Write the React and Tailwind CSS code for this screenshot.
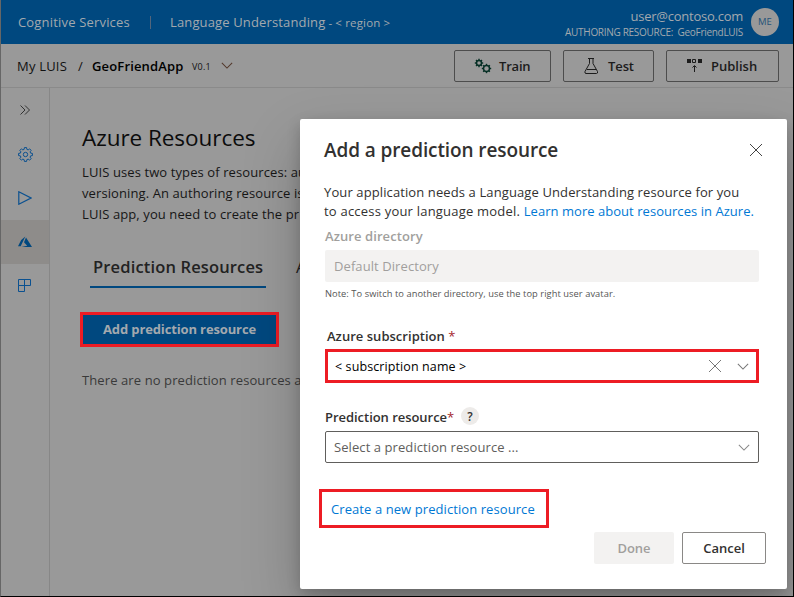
import React from "react";

function Chevron({ className }) {
  return (
    <svg viewBox="0 0 14 8" className={className} fill="none" stroke="currentColor" strokeWidth="1.2">
      <path d="M1 1l6 6 6-6" />
    </svg>
  );
}

function Cross({ className }) {
  return (
    <svg viewBox="0 0 12 12" className={className} fill="none" stroke="currentColor" strokeWidth="1">
      <path d="M0 0l12 12M12 0L0 12" />
    </svg>
  );
}

function Gear({ cx, cy, r }) {
  const teeth = [0, 45, 90, 135, 180, 225, 270, 315];
  return (
    <g>
      <circle cx={cx} cy={cy} r={r} strokeWidth="1.5" fill="none" />
      {teeth.map((a) => (
        <path key={a} d={`M${cx} ${cy - r - 0.4}v-1.3`} strokeWidth="1.4" transform={`rotate(${a} ${cx} ${cy})`} />
      ))}
    </g>
  );
}

// Outline of an eight-toothed cog centred in a 15px box
const cogPoints = Array.from({ length: 8 }, (_, i) =>
  [
    [-15, 5.3],
    [-9, 7],
    [9, 7],
    [15, 5.3],
  ].map(([offset, radius]) => {
    const a = ((i * 45 + offset) * Math.PI) / 180;
    return `${(7.5 + radius * Math.sin(a)).toFixed(2)},${(7.5 - radius * Math.cos(a)).toFixed(2)}`;
  }).join(" ")
).join(" ");

function Header() {
  return (
    <header className="flex h-11 items-center bg-[#00487f] pl-[17px] pr-[14px] text-[#a3a9ae]">
      <span className="w-[132px] pt-[2px] text-[13px] tracking-[0.18px]">Cognitive Services</span>
      <span className="h-[13px] w-px bg-[#53657b]" />
      <span className="ml-[19px] pt-[2px] text-[13px] tracking-[0.14px]">Language Understanding</span>
      <span className="ml-[3px] pt-[2px] text-[11.5px] tracking-[0.15px]">- &lt; region &gt;</span>
      <div className="ml-auto mr-2 flex flex-col items-end pt-[3px]">
        <span className="text-[13px] leading-[16px] tracking-[-0.25px]">user@contoso.com</span>
        <span className="whitespace-pre text-[10px] leading-[16px] tracking-[-0.3px]">AUTHORING RESOURCE:  GeoFriendLUIS</span>
      </div>
      <span className="flex size-7 items-center justify-center rounded-full bg-[#999] pt-px text-[9.5px] text-[#265378]">ME</span>
    </header>
  );
}

function Toolbar() {
  return (
    <div className="flex h-11 items-center border-b border-[#8a8a8a] pl-4 pr-[14px] text-[#111]">
      <span className="w-[61px] pt-[2px] text-[13px] tracking-[0.2px]">My LUIS</span>
      <span className="w-[14px] pt-[2px] text-[13px]">/</span>
      <span className="w-[100px] pt-[2px] text-[13px] font-semibold tracking-[0.15px] text-black">GeoFriendApp</span>
      <span className="w-[29px] pt-[2px] text-[9px] tracking-[0.2px]">V0.1</span>
      <Chevron className="h-[7px] w-[12px] text-[#54392c]" />
      <div className="ml-auto flex gap-3 text-[13px] font-semibold text-[#1c1c1c]">
        <button className="flex h-8 w-[97px] items-center rounded-[2px] border border-[#4d4d4d] pl-[19px]">
          <svg className="mr-[7px] h-4 w-[18px] stroke-[#073026]" viewBox="0 0 18 16">
            <Gear cx={5} cy={5} r={2.5} />
            <Gear cx={12.5} cy={10.5} r={3} />
          </svg>
          <span className="pt-[2px] tracking-[-0.2px]">Train</span>
        </button>
        <button className="flex h-8 w-[91px] items-center rounded-[2px] border border-[#4d4d4d] pl-[20px]">
          <svg className="mr-[9px] h-4 w-[15px]" viewBox="0 0 15 16" fill="none" stroke="#1c1c1c">
            <path d="M4 .5h6M5.500 .5v5L1 13.500q-.5 2 1 2h10.500q1.500 0 1-2L9 5.500v-5M3 11.500h9" />
          </svg>
          <span className="pt-[2px] tracking-[-0.1px]">Test</span>
        </button>
        <button className="flex h-8 w-[113px] items-center rounded-[2px] border border-[#4d4d4d] pl-[20px]">
          <svg className="mr-[9px] h-4 w-[15px]" viewBox="0 0 15 16" fill="none" stroke="#1c1c1c">
            <path d="M0 1h4v4H0zM11 1h4v4h-4z" fill="#1c1c1c" stroke="none" />
            <path d="M5.500 1.500h3v3h-3zM7.500 14V8M5.500 9.500l2-2 2 2" />
          </svg>
          <span className="pt-[2px]">Publish</span>
        </button>
      </div>
    </div>
  );
}

function Sidebar() {
  return (
    <nav className="flex w-[49px] shrink-0 flex-col border-r border-[#878787] text-[#0b5190]">
      <div className="flex h-11 items-center justify-center text-[#333]">
        <svg className="h-[10px] w-[10px]" viewBox="0 0 10 10" fill="none" stroke="currentColor">
          <path d="M.5 .5L5 5 .5 9.500M5 .5L9.500 5 5 9.500" />
        </svg>
      </div>
      <div className="flex h-11 items-center justify-center">
        <svg className="size-[15px]" viewBox="0 0 15 15" fill="none" stroke="currentColor">
          <circle cx="7.500" cy="7.500" r="2.200" />
          <polygon points={cogPoints} strokeLinejoin="round" />
        </svg>
      </div>
      <div className="flex h-11 items-center justify-center">
        <svg className="h-[14px] w-[14px]" viewBox="0 0 14 14" fill="none" stroke="currentColor" strokeWidth="1.200">
          <path d="M.8 .8L13 7 .8 13.200z" />
        </svg>
      </div>
      <div className="flex h-11 items-center justify-center bg-[#8e8c8a]">
        <svg className="h-[12px] w-[14px]" viewBox="0 0 14 12" fill="#00487f">
          <path d="M7.300 .5L3.200 3.900 0 10.300h2.700zM8 1.400L6 6.200l3.200 3.600-5.800 1.200H14z" />
        </svg>
      </div>
      <div className="flex h-[43px] items-center justify-center pr-px">
        <svg className="size-[13px]" viewBox="0 0 13 13" fill="none" stroke="currentColor">
          <path d="M.5 .5h12v6H.5zM.5 6.500h6v6h-6zM6.500 .5v6" />
        </svg>
      </div>
    </nav>
  );
}

function Resources() {
  return (
    <main className="flex min-w-0 flex-1 flex-col items-start overflow-hidden pl-8 pt-[34px] text-[#161616]">
      <h1 className="text-[22.5px] leading-8 tracking-[-0.05px] text-[#0c0c0c]">Azure Resources</h1>
      <p className="mt-2 text-[13px] leading-[21px] tracking-[0.1px]">
        LUIS uses two types of resources: au
        <br />
        versioning. An authoring resource is
        <br />
        LUIS app, you need to create the pr
      </p>
      <div className="ml-2 mt-[23px] flex text-[16.5px] text-[#222]">
        <span className="h-[40px] w-[176px] border-b-2 border-[#00487f] pl-[3px] leading-[38px] font-semibold tracking-[0.15px]">Prediction Resources</span>
        <span className="ml-[30px] leading-[38px]">A</span>
      </div>
      <button className="-ml-[2px] mt-6 h-[35px] w-[199px] border-3 border-[#ed1c24] bg-[#00487f] pl-5 text-left text-[13px] font-bold tracking-[-0.13px] text-[#a3a9ae]">
        Add prediction resource
      </button>
      <p className="mt-[23px] text-[13px] leading-5 tracking-[0.1px] text-[#3a3a3a]">There are no prediction resources a</p>
    </main>
  );
}

function PredictionDialog() {
  return (
    <section className="absolute left-[299px] top-[119px] flex h-[470px] w-[487px] flex-col rounded-[2px] bg-white pl-6 text-[13px] tracking-[0.08px] text-[#323130] shadow-[0_25px_58px_rgba(0,0,0,0.22),0_5px_14px_rgba(0,0,0,0.18)]">
      <div className="flex h-[62px] items-center justify-between pr-[25px]">
        <h2 className="pt-px text-[19px] font-semibold tracking-[-0.1px]">Add a prediction resource</h2>
        <Cross className="size-3 text-[#444]" />
      </div>
      <p className="mt-[2px] leading-[19px] tracking-[0.11px]">
        Your application needs a Language Understanding resource for you
        <br />
        <span className="tracking-[0.21px]">to access your language model. </span>
        <a className="tracking-[0.04px] text-[#0078d4]">Learn more about resources in Azure.</a>
      </p>
      <div className="flex w-[435px] flex-col pl-px">
        <label className="mt-[5px] h-[24px] leading-5 font-semibold text-[#a19f9d]">Azure directory</label>
        <div className="h-8 rounded-[2px] bg-[#f3f2f1] pl-[9px] leading-8 text-[#a19f9d]">Default Directory</div>
        <span className="mt-1 text-[9.3px] leading-4 tracking-[0.06px] text-[#555]">Note: To switch to another directory, use the top right user avatar.</span>
        <label className="mt-6 h-[23px] pl-[2px] leading-5 font-semibold tracking-[0.03px]">
          Azure subscription <span className="font-normal text-[#a4262c]">*</span>
        </label>
        <div className="flex h-[34px] items-center border-3 border-[#ed1c24] px-[7px] text-[12.5px] text-black">
          <span className="flex-1 pt-[2px] tracking-[0.1px]">&lt; subscription name &gt;</span>
          <Cross className="mr-4 size-3 text-[#777]" />
          <Chevron className="h-[7px] w-[12px] text-[#777]" />
        </div>
        <div className="mt-6 flex h-[24px] items-start leading-5 font-semibold tracking-[-0.04px]">
          <span className="w-[136px]">Prediction resource<span className="font-normal text-[#a4262c]">*</span></span>
          <span className="flex size-[18px] items-center justify-center rounded-full bg-[#edebe9] pt-px text-[12px]">?</span>
        </div>
        <div className="flex h-8 items-center rounded-[2px] border border-[#605e5c] px-2 text-[#605e5c]">
          <span className="flex-1 pt-px">Select a prediction resource ...</span>
          <Chevron className="h-[7px] w-[12px] text-[#888]" />
        </div>
      </div>
      <a className="-ml-[5px] mt-[26px] h-[39px] w-[230px] border-3 border-[#ed1c24] pl-[9px] leading-[34px] text-[#0078d4]">Create a new prediction resource</a>
      <div className="mt-1 flex justify-end gap-2 pr-[21px] font-semibold tracking-[0px]">
        <button className="h-8 w-20 rounded-[2px] bg-[#f3f2f1] pt-px text-[#a19f9d]">Done</button>
        <button className="h-8 w-[84px] rounded-[2px] border border-[#8a8886] pt-px">Cancel</button>
      </div>
    </section>
  );
}

export default function App() {
  return (
    <div className="relative flex h-[597px] w-[794px] flex-col overflow-hidden whitespace-nowrap border-b border-l border-r border-b-black border-l-[#666] border-r-black bg-[#999] font-['Open_Sans','Noto_Sans',sans-serif]">
      <Header />
      <Toolbar />
      <div className="flex min-h-0 flex-1">
        <Sidebar />
        <Resources />
      </div>
      <PredictionDialog />
    </div>
  );
}
